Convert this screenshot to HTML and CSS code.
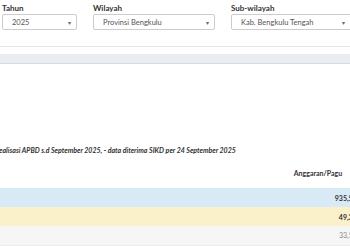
FILE: index.html
```html
<!DOCTYPE html>
<html lang="id">
<head>
  <meta charset="UTF-8" />
  <link rel="stylesheet" href="styles.css">
  <title>Realisasi APBD</title>
</head>
<body>
  <div class="filters">
    <div class="field field-year">
      <label class="field-label">Tahun</label>
      <div class="select-box"><span>2025</span><span class="caret">&#9662;</span></div>
    </div>
    <div class="field field-region">
      <label class="field-label">Wilayah</label>
      <div class="select-box"><span>Provinsi Bengkulu</span><span class="caret">&#9662;</span></div>
    </div>
    <div class="field field-sub">
      <label class="field-label">Sub-wilayah</label>
      <div class="select-box"><span>Kab. Bengkulu Tengah</span><span class="caret">&#9662;</span></div>
    </div>
  </div>

  <div class="divider"></div>
  <div class="tab-bar"></div>

  <div class="content">
    <p class="caption">Realisasi APBD s.d September 2025, - data diterima SIKD per 24 September 2025</p>

    <table class="data-table">
      <thead>
        <tr><th class="col-name"></th><th class="col-num">Anggaran/Pagu</th></tr>
      </thead>
      <tbody>
        <tr class="row-info"><td></td><td class="col-num">935,5 M</td></tr>
        <tr class="row-warn"><td></td><td class="col-num">49,3 M</td></tr>
        <tr class="row-muted"><td></td><td class="col-num">33,5 M</td></tr>
      </tbody>
    </table>
  </div>
</body>
</html>
```

FILE: styles.css
```css
* {
  box-sizing: border-box;
}

html, body {
  margin: 0;
  padding: 0;
  height: 100%;
  overflow: hidden;
  background: #ffffff;
  font-family: 'Lato', sans-serif;
  color: #333333;
}

.filters {
  display: flex;
  gap: 16px;
  padding: 3px 0 0 2px;
  width: 420px;
}

.field {
  display: flex;
  flex-direction: column;
}

.field-year { width: 75px; }
.field-region { width: 122px; }
.field-sub { width: 125px; }

.field-label {
  font-size: 8px;
  font-weight: 700;
  line-height: 10px;
  margin-bottom: 1px;
  color: #333333;
}

.select-box {
  display: flex;
  justify-content: space-between;
  align-items: center;
  height: 16px;
  padding: 0 5px 0 9px;
  border: 1px solid #cccccc;
  border-radius: 2px;
  font-size: 7.5px;
  color: #555555;
}

.field-sub .select-box {
  padding-right: 10px;
}

.caret {
  font-size: 6px;
  color: #666666;
}

.divider {
  margin-top: 16px;
  height: 1px;
  background: #e8e8e8;
}

.tab-bar {
  margin-top: 7px;
  height: 10px;
  background: #e9edf2;
  border-bottom: 1px solid #d6dade;
}

.content {
  padding-top: 82px;
}

.caption {
  margin: 0 0 0 -5px;
  font-size: 7px;
  font-style: italic;
  font-weight: 700;
  color: #333333;
  white-space: nowrap;
}

.data-table {
  margin-top: 15px;
  width: 362px;
  table-layout: fixed;
  border-collapse: collapse;
  font-size: 7px;
}

.data-table th {
  height: 19px;
  font-weight: 700;
  text-align: center;
  vertical-align: top;
  padding: 0;
}

.data-table th.col-num {
  padding-right: 6px;
}

.data-table td {
  height: 19px;
  padding: 0 1px 0 0;
}

.col-num {
  width: 82px;
  text-align: right;
  font-weight: 700;
}

.row-info td { background: #d9eaf7; }
.row-warn td { background: #faf0c9; }
.row-muted td { background: #f6f6f6; color: #888888; font-weight: 400; }
.row-muted td { border-bottom: 1px solid #eeeeee; }
```
